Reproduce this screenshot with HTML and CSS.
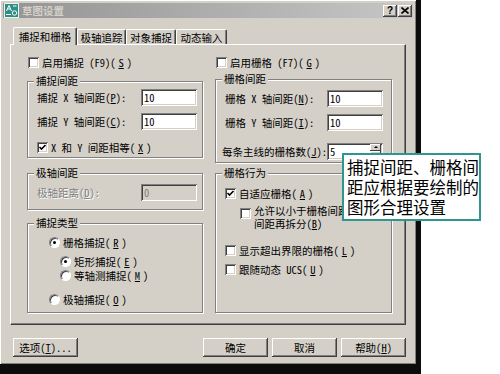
FILE: index.html
```html
<!DOCTYPE html>
<html lang="zh-CN">
<head>
    <meta charset="UTF-8">
    <title>草图设置</title>
    <link rel="stylesheet" href="styles.css">
</head>
<body>
<div class="screen">
    <div class="dialog">
        <div class="titlebar">
            <svg class="app-icon" width="15" height="15" viewBox="0 0 15 15">
                <rect x="0.5" y="0.5" width="14" height="14" fill="#2f8f86" stroke="#e8f4f0"/>
                <path d="M2.5 8 L5 2.5 L7.5 8 M3.6 6 H6.4" stroke="#fff" fill="none"/>
                <circle cx="10.5" cy="10" r="2.2" stroke="#fff" fill="none"/>
                <path d="M2 11.5 H7 M9 3 H12.5" stroke="#fff"/>
            </svg>
            <span class="title">草图设置</span>
            <div class="caption-buttons">
                <span class="cap-btn">?</span>
                <span class="cap-btn">
                    <svg width="8" height="7" viewBox="0 0 8 7"><path d="M0.5 0.5 L7.5 6.5 M7.5 0.5 L0.5 6.5" stroke="#000" stroke-width="1.6"/></svg>
                </span>
            </div>
        </div>

        <div class="tabs">
            <div class="tab active">捕捉和栅格</div>
            <div class="tab w49">极轴追踪</div>
            <div class="tab w50">对象捕捉</div>
            <div class="tab w51">动态输入</div>
        </div>

        <div class="panel">
            <!-- left column -->
            <div class="col col-left">
                <div class="check top-check"><span class="box"></span>启用捕捉 (F9)(<u>S</u>)</div>

                <div class="group snap-spacing">
                    <div class="group-title">捕捉间距</div>
                    <div class="field first"><span>捕捉 X 轴间距(<u>P</u>):</span><span class="input">10</span></div>
                    <div class="field second"><span>捕捉 Y 轴间距(<u>C</u>):</span><span class="input">10</span></div>
                    <div class="check equal-check"><span class="box checked"></span>X 和 Y 间距相等(<u>X</u>)</div>
                </div>

                <div class="group polar-spacing">
                    <div class="group-title">极轴间距</div>
                    <div class="field polar-field"><span class="disabled">极轴距离(<u>D</u>):</span><span class="input input-disabled">0</span></div>
                </div>

                <div class="group snap-type">
                    <div class="group-title">捕捉类型</div>
                    <div class="radio-row r1"><span class="radio on"></span>栅格捕捉(<u>R</u>)</div>
                    <div class="radio-row r2"><span class="radio on"></span>矩形捕捉(<u>E</u>)</div>
                    <div class="radio-row r3"><span class="radio"></span>等轴测捕捉(<u>M</u>)</div>
                    <div class="radio-row r4"><span class="radio"></span>极轴捕捉(<u>O</u>)</div>
                </div>
            </div>

            <!-- right column -->
            <div class="col col-right">
                <div class="check top-check"><span class="box"></span>启用栅格 (F7)(<u>G</u>)</div>

                <div class="group grid-spacing">
                    <div class="group-title">栅格间距</div>
                    <div class="field first"><span>栅格 X 轴间距(<u>N</u>):</span><span class="input">10</span></div>
                    <div class="field second"><span>栅格 Y 轴间距(<u>I</u>):</span><span class="input">10</span></div>
                    <div class="field third"><span>每条主线的栅格数(<u>J</u>):</span>
                        <span class="input spinbox">5
                            <span class="spin">
                                <span class="spin-btn"><span class="arrow-up"></span></span>
                                <span class="spin-btn"><span class="arrow-down"></span></span>
                            </span>
                        </span>
                    </div>
                </div>

                <div class="group grid-behavior">
                    <div class="group-title">栅格行为</div>
                    <div class="check b1"><span class="box checked"></span>自适应栅格(<u>A</u>)</div>
                    <div class="check b2"><span class="box"></span><span>允许以小于栅格间距的<br>间距再拆分(<u>B</u>)</span></div>
                    <div class="check b3"><span class="box"></span>显示超出界限的栅格(<u>L</u>)</div>
                    <div class="check b4"><span class="box"></span>跟随动态 UCS(<u>U</u>)</div>
                </div>
            </div>
        </div>

        <div class="footer">
            <div class="btn">选项(<u>T</u>)...</div>
            <div class="footer-right">
                <div class="btn">确定</div>
                <div class="btn">取消</div>
                <div class="btn">帮助(<u>H</u>)</div>
            </div>
        </div>
    </div>

    <div class="callout">捕捉间距、栅格间距应根据要绘制的图形合理设置</div>
</div>
</body>
</html>
```

FILE: styles.css
```css
* {
    box-sizing: border-box;
}
body {
    margin: 0;
    background: #fff;
    font-family: "Noto Sans Mono CJK SC", "Noto Sans CJK SC", sans-serif;
    font-size: 10.5px;
    line-height: 13px;
    color: #000;
}
u {
    text-decoration: underline;
}
.screen {
    position: relative;
    width: 500px;
    height: 374px;
    overflow: hidden;
}
.dialog {
    width: 421px;
    height: 374px;
    padding-top: 3px;
    background: #d4d0c8;
    border-right: 5px solid #0c0c0c;
    border-bottom: 10px solid #0c0c0c;
    box-shadow: inset 1px 1px #fff, inset -1px -1px #808080;
}

/* title bar */
.titlebar {
    display: flex;
    align-items: center;
    height: 15px;
    margin: 0 3px;
    padding: 0 1px 0 1px;
    background: linear-gradient(90deg, #949494, #c6c6c6);
}
.app-icon {
    margin-right: 3px;
}
.title {
    color: #d4d0c8;
    font-weight: bold;
}
.caption-buttons {
    display: flex;
    gap: 1px;
    margin-left: auto;
}
.cap-btn {
    display: flex;
    align-items: center;
    justify-content: center;
    width: 14px;
    height: 12px;
    background: #d4d0c8;
    font-family: "Liberation Sans", sans-serif;
    font-weight: bold;
    font-size: 10px;
    box-shadow: inset -1px -1px #404040, inset 1px 1px #fff, inset -2px -2px #808080;
}

/* tabs */
.tabs {
    position: relative;
    z-index: 1;
    display: flex;
    align-items: flex-end;
    height: 17px;
    margin-top: 9px;
    padding-left: 13px;
}
.tab {
    height: 15px;
    padding-top: 1px;
    text-align: center;
    border-top: 1px solid #fff;
    border-left: 1px solid #fff;
    border-right: 1px solid #404040;
    border-radius: 2px 2px 0 0;
    box-shadow: inset -1px 0 #808080;
}
.tab.active {
    width: 64px;
    height: 18px;
    margin-bottom: -1px;
    padding-top: 2px;
    background: #d4d0c8;
}
.w49 { width: 49px; }
.w50 { width: 50px; }
.w51 { width: 51px; }

/* page panel */
.panel {
    display: flex;
    gap: 12px;
    width: 396px;
    height: 281px;
    margin-left: 10px;
    padding: 11px 0 0 16px;
    border-top: 1px solid #fff;
    border-left: 1px solid #fff;
    border-right: 1px solid #404040;
    border-bottom: 1px solid #404040;
    box-shadow: inset -1px -1px #808080;
}
.col-left {
    width: 176px;
}
.col-right {
    width: 177px;
}

/* group boxes */
.group {
    border: 1px solid #808080;
    box-shadow: inset 1px 1px #fff, 1px 1px #fff;
}
.group-title {
    width: fit-content;
    height: 14px;
    margin: -8px 0 0 6px;
    padding: 0 2px;
    line-height: 14px;
    background: #d4d0c8;
}
.snap-spacing {
    height: 77px;
    margin-top: 12px;
}
.polar-spacing {
    height: 37px;
    margin-top: 15px;
}
.snap-type {
    height: 90px;
    margin-top: 13px;
}
.grid-spacing {
    height: 84px;
    margin-top: 10px;
}
.grid-behavior {
    height: 140px;
    margin-top: 10px;
}

/* label + edit rows */
.field {
    display: flex;
    align-items: center;
    justify-content: space-between;
    height: 17px;
    padding: 0 5px 0 9px;
}
.col-right .field {
    padding: 0 8px 0 9px;
}
.field.first {
    margin-top: 1px;
}
.col-right .field.first {
    margin-top: 4px;
}
.field.second {
    margin-top: 7px;
}
.field.third {
    margin-top: 12px;
    padding-left: 6px;
}
.polar-field {
    margin-top: 4px;
}
.input {
    display: flex;
    width: 56px;
    height: 17px;
    padding: 2px 0 0 3px;
    background: #fff;
    box-shadow: inset 1px 1px #808080, inset -1px -1px #fff, inset 2px 2px #404040, inset -2px -2px #d4d0c8;
}
.input-disabled {
    background: #d4d0c8;
    color: #808080;
}
.disabled {
    color: #808080;
    text-shadow: 1px 1px #fff;
}
.spinbox {
    position: relative;
}
.spin {
    display: flex;
    flex-direction: column;
    margin: -0px 2px 2px auto;
    width: 11px;
    height: 13px;
}
.spin-btn {
    display: flex;
    align-items: center;
    justify-content: center;
    height: 6.5px;
    background: #d4d0c8;
    box-shadow: inset -1px -1px #404040, inset 1px 1px #fff;
}
.arrow-up {
    border-left: 2px solid transparent;
    border-right: 2px solid transparent;
    border-bottom: 2px solid #000;
}
.arrow-down {
    border-left: 2px solid transparent;
    border-right: 2px solid transparent;
    border-top: 2px solid #000;
}
.spinbox {
    padding-top: 0;
    align-items: center;
}
.spin {
    margin-top: 0;
}

/* checkboxes */
.check {
    display: flex;
    align-items: center;
    gap: 3px;
    height: 13px;
}
.top-check {
    padding-left: 1px;
}
.box {
    flex: none;
    width: 11px;
    height: 11px;
    background: #fff;
    box-shadow: inset 1px 1px #808080, inset -1px -1px #fff, inset 2px 2px #404040, inset -2px -2px #d4d0c8;
}
.box.checked {
    background: #fff url("data:image/svg+xml,%3Csvg xmlns='http://www.w3.org/2000/svg' width='11' height='11'%3E%3Cpath d='M2.5 5 L4.5 7 L8.5 3' stroke='%23000' stroke-width='1.6' fill='none'/%3E%3C/svg%3E") no-repeat;
}
.equal-check {
    margin-top: 11px;
    padding-left: 9px;
}
.b1 {
    margin-top: 7px;
    padding-left: 9px;
}
.b2 {
    align-items: flex-start;
    height: 26px;
    margin-top: 4px;
    padding-left: 24px;
}
.b2 .box {
    margin-top: 4px;
}
.b3 {
    margin-top: 14px;
    padding-left: 9px;
}
.b4 {
    margin-top: 6px;
    padding-left: 9px;
}

/* radio buttons */
.radio-row {
    display: flex;
    align-items: center;
    gap: 3px;
    height: 13px;
}
.r1 { margin-top: 6px; padding-left: 21px; }
.r2 { margin-top: 6px; padding-left: 32px; }
.r3 { margin-top: 1px; padding-left: 32px; }
.r4 { margin-top: 11px; padding-left: 21px; }
.radio {
    display: flex;
    align-items: center;
    justify-content: center;
    flex: none;
    width: 11px;
    height: 11px;
    border-radius: 50%;
    background: #fff;
    border: 1px solid;
    border-color: #808080 #fff #fff #808080;
    box-shadow: inset 1px 1px #404040;
}
.radio.on::after {
    content: "";
    width: 3px;
    height: 3px;
    border-radius: 50%;
    background: #000;
}

/* footer buttons */
.footer {
    display: flex;
    margin-top: 13px;
    padding: 0 10px 0 13px;
}
.footer-right {
    display: flex;
    gap: 4px;
    margin-left: auto;
}
.btn {
    width: 65px;
    height: 19px;
    padding-top: 3px;
    text-align: center;
    box-shadow: inset -1px -1px #404040, inset 1px 1px #fff, inset -2px -2px #808080;
}

/* tooltip callout over the dialog */
.callout {
    position: absolute;
    left: 342px;
    top: 153px;
    width: 139px;
    height: 68px;
    padding: 2px 0 0 3px;
    background: #fff;
    border: 2px solid #2e968e;
    font-family: "Noto Sans CJK SC", sans-serif;
    font-size: 16.5px;
    line-height: 20px;
}
```
